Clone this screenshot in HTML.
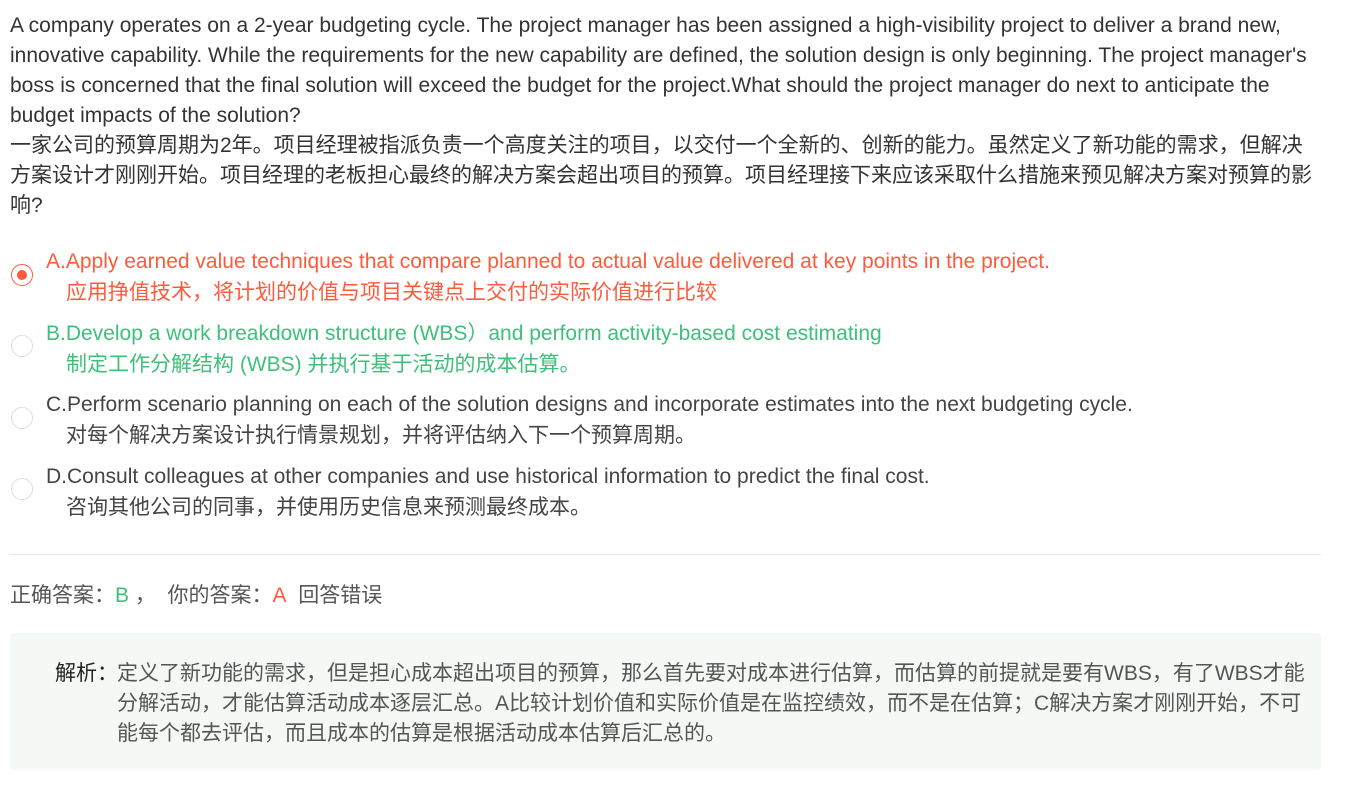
<!DOCTYPE html>
<html><head><meta charset="utf-8"><style>
body{margin:0;background:#fff;font-family:"Liberation Sans","Noto Sans CJK SC",sans-serif;font-size:21px;color:#333;}
.q{position:absolute;left:10px;top:11px;width:1312px;line-height:30px;}
.opt{position:absolute;left:46px;line-height:31px;white-space:nowrap}
.opt .cn{padding-left:20px;}
.radio{position:absolute;left:11px;width:22px;height:22px;border:1px solid #ddd;border-radius:50%;box-sizing:border-box;}
.red{color:#ff5a3c}.green{color:#3ec07a}.gray{color:#444}
</style></head><body>
<div class="q">A company operates on a 2-year budgeting cycle. The project manager has been assigned a high-visibility project to deliver a brand new, innovative capability. While the requirements for the new capability are defined, the solution design is only beginning. The project manager's boss is concerned that the final solution will exceed the budget for the project.What should the project manager do next to anticipate the budget impacts of the solution?<br>一家公司的预算周期为2年。项目经理被指派负责一个高度关注的项目，以交付一个全新的、创新的能力。虽然定义了新功能的需求，但解决方案设计才刚刚开始。项目经理的老板担心最终的解决方案会超出项目的预算。项目经理接下来应该采取什么措施来预见解决方案对预算的影响?</div>

<div class="radio" style="top:264px;border:1.5px solid #ff5a3c"><div style="position:absolute;left:5px;top:5px;width:10px;height:10px;border-radius:50%;background:#ff5a3c"></div></div>
<div class="opt red" style="top:246px">A.Apply earned value techniques that compare planned to actual value delivered at key points in the project.<br><span class="cn">应用挣值技术，将计划的价值与项目关键点上交付的实际价值进行比较</span></div>

<div class="radio" style="top:335px"></div>
<div class="opt green" style="top:318px">B.Develop a work breakdown structure (WBS）and perform activity-based cost estimating<br><span class="cn">制定工作分解结构 (WBS) 并执行基于活动的成本估算。</span></div>

<div class="radio" style="top:407px"></div>
<div class="opt gray" style="top:389px">C.Perform scenario planning on each of the solution designs and incorporate estimates into the next budgeting cycle.<br><span class="cn">对每个解决方案设计执行情景规划，并将评估纳入下一个预算周期。</span></div>

<div class="radio" style="top:478px"></div>
<div class="opt gray" style="top:461px">D.Consult colleagues at other companies and use historical information to predict the final cost.<br><span class="cn">咨询其他公司的同事，并使用历史信息来预测最终成本。</span></div>

<div style="position:absolute;left:10px;top:554px;width:1311px;height:1px;background:#e8e8e8"></div>
<div style="position:absolute;left:10px;top:581px;line-height:30px;color:#555">正确答案：<span class="green">B</span> ，&nbsp; 你的答案：<span class="red">A</span>&nbsp; 回答错误</div>

<div style="position:absolute;left:10px;top:633px;width:1311px;height:137px;background:#f4f9f6;border-radius:4px"></div>
<div style="position:absolute;left:55px;top:659px;line-height:30px;color:#222">解析：</div>
<div style="position:absolute;left:117px;top:659px;width:1195px;line-height:30px;color:#555">定义了新功能的需求，但是担心成本超出项目的预算，那么首先要对成本进行估算，而估算的前提就是要有WBS，有了WBS才能分解活动，才能估算活动成本逐层汇总。A比较计划价值和实际价值是在监控绩效，而不是在估算；C解决方案才刚刚开始，不可能每个都去评估，而且成本的估算是根据活动成本估算后汇总的。</div>
</body></html>
